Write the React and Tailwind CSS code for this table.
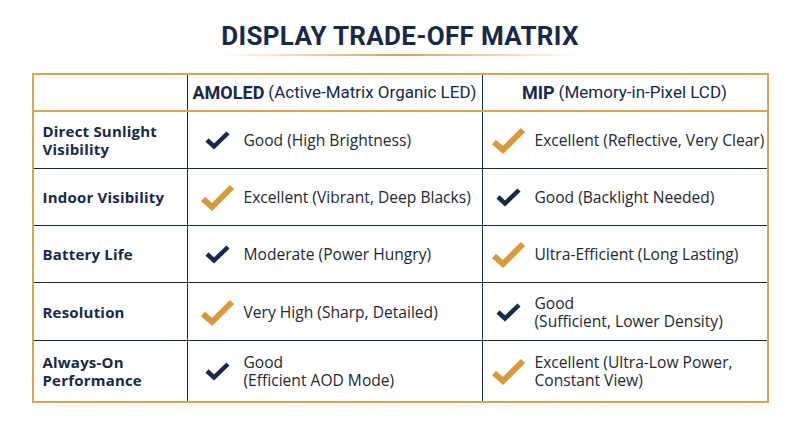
const rows = [
  {
    label: ["Direct Sunlight", "Visibility"],
    a: { gold: false, text: ["Good (High Brightness)"] },
    m: { gold: true, text: ["Excellent (Reflective, Very Clear)"] },
    h: "h-[57px]",
  },
  {
    label: ["Indoor Visibility"],
    a: { gold: true, text: ["Excellent (Vibrant, Deep Blacks)"] },
    m: { gold: false, text: ["Good (Backlight Needed)"] },
    h: "h-[57px]",
  },
  {
    label: ["Battery Life"],
    a: { gold: false, text: ["Moderate (Power Hungry)"] },
    m: { gold: true, text: ["Ultra-Efficient (Long Lasting)"] },
    h: "h-[57px]",
  },
  {
    label: ["Resolution"],
    a: { gold: true, text: ["Very High (Sharp, Detailed)"] },
    m: { gold: false, text: ["Good", "(Sufficient, Lower Density)"] },
    h: "h-[58px]",
  },
  {
    label: ["Always-On", "Performance"],
    a: { gold: false, text: ["Good", "(Efficient AOD Mode)"] },
    m: { gold: true, text: ["Excellent (Ultra-Low Power,", "Constant View)"] },
    h: "h-[60px]",
    last: true,
  },
];

const Check = ({ gold }) =>
  gold ? (
    <svg width="36" height="30" viewBox="0 0 36 30" className="shrink-0">
      <path d="M3 17 L12 25 L32 5" fill="none" stroke="#d8993a" strokeWidth="6" strokeLinejoin="miter" />
    </svg>
  ) : (
    <svg width="28" height="22" viewBox="0 0 28 22" className="shrink-0">
      <path d="M3 11 L10 17.5 L24 4" fill="none" stroke="#17284a" strokeWidth="4.5" strokeLinejoin="miter" />
    </svg>
  );

const Cell = ({ data, pad, border }) => (
  <div className={`flex items-center ${pad} ${border}`}>
    <div className="w-[44px] flex justify-center shrink-0">
      <Check gold={data.gold} />
    </div>
    <div className="ml-[4px] whitespace-nowrap text-[15.6px] leading-[18px] text-[#222831]">
      {data.text.map((t) => (
        <div key={t}>{t}</div>
      ))}
    </div>
  </div>
);

export default function App() {
  return (
    <div className="w-[800px] h-[447px] bg-white flex flex-col items-center font-['Open_Sans',sans-serif]">
      <h1 className="mt-[22px] text-[26px] leading-[29px] font-bold tracking-[0.3px] text-[#17284a] font-['Roboto',sans-serif]">
        DISPLAY TRADE-OFF MATRIX
      </h1>
      <div className="mt-[3px] h-[2px] w-[356px] bg-linear-to-r from-transparent via-[#d6a24e] to-transparent" />
      <div className="mt-[17px] w-[737px] border-2 border-[#d9a653]">
        <div className="grid grid-cols-[154px_295px_284px] h-[37px] border-b-[2.5px] border-[#d9a653] font-['Roboto',sans-serif] text-[17px] text-[#17284a]">
          <div className="border-r-[1.5px] border-[#17284a]" />
          <div className="flex items-center justify-center border-r-[1.5px] border-[#17284a]">
            <span className="font-bold text-[18px]">AMOLED</span>
            <span className="ml-[4px]">(Active-Matrix Organic LED)</span>
          </div>
          <div className="flex items-center justify-center">
            <span className="font-bold text-[18px]">MIP</span>
            <span className="ml-[4px]">(Memory-in-Pixel LCD)</span>
          </div>
        </div>
        {rows.map((r, i) => (
          <div
            key={i}
            className={`grid grid-cols-[154px_295px_284px] ${r.h} ${r.last ? "" : "border-b-[1.5px] border-[#17284a]"}`}
          >
            <div className="flex flex-col justify-center pl-[9px] border-r-[1.5px] border-[#17284a] text-[15px] leading-[18px] font-bold tracking-[0.2px] text-[#17284a]">
              {r.label.map((l) => (
                <div key={l}>{l}</div>
              ))}
            </div>
            <Cell data={r.a} pad="pl-[8px]" border="border-r-[1.5px] border-[#17284a]" />
            <Cell data={r.m} pad="pl-[4px]" border="" />
          </div>
        ))}
      </div>
    </div>
  );
}
